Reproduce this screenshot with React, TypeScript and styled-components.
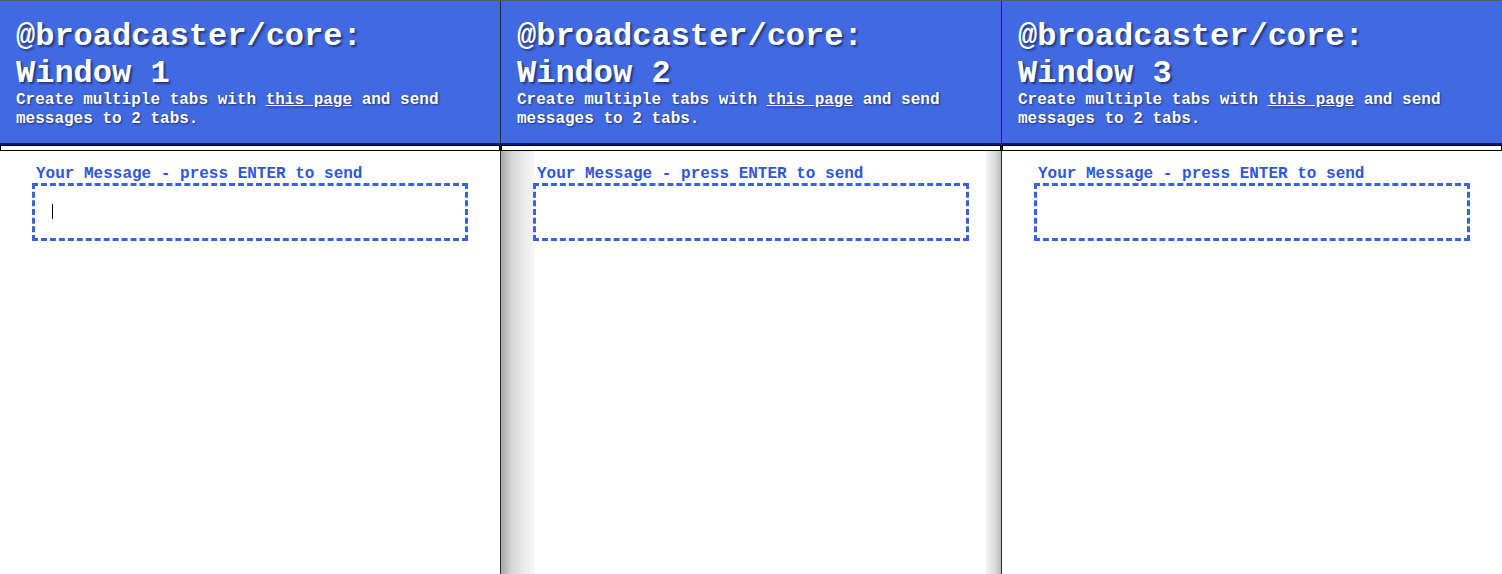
import { createGlobalStyle, css } from 'styled-components';
import styled from 'styled-components';

const GlobalStyle = createGlobalStyle`
  html, body {
    margin: 0;
    padding: 0;
    background: #ffffff;
  }
  body {
    font-family: "Liberation Mono", "Courier New", monospace;
  }
`;

const windows = [1, 2, 3];

export default function App() {
  return (
    <>
      <GlobalStyle />
      <Desk>
        {windows.map((n) => (
          <Window key={n} $divider={n !== 3}>
            <Header>
              <Title>
                @broadcaster/core:
                <br />
                Window {n}
              </Title>
              <Intro>
                Create multiple tabs with <IntroLink href="#">this page</IntroLink> and send
                messages to 2 tabs.
              </Intro>
            </Header>
            <Rule />
            <Body $shaded={n === 2}>
              <Label htmlFor={`msg-${n}`}>Your Message - press ENTER to send</Label>
              <InputWrap>
                <MessageInput id={`msg-${n}`} type="text" />
                {/* the first window has the focused field, caret drawn over it */}
                {n === 1 && <Caret />}
              </InputWrap>
            </Body>
          </Window>
        ))}
      </Desk>
    </>
  );
}

const Desk = styled.div`
  display: flex;
  width: 1502px;
  height: 574px;
  border-top: 1px solid #5a5a5a;
  box-sizing: border-box;
  overflow: hidden;
`;

const Window = styled.section<{ $divider: boolean }>`
  width: 500px;
  display: flex;
  flex-direction: column;
  background: #ffffff;
  ${(p) =>
    p.$divider &&
    css`
      border-right: 1px solid #2a2a2a;
    `}
`;

const Header = styled.header`
  background: #4169e1;
  color: #ffffff;
  padding: 17px 16px 0 16px;
  height: 144px;
  box-sizing: border-box;
  border-bottom: 2px solid #0b1a78;
`;

const Title = styled.h1`
  margin: 0;
  font-size: 32px;
  line-height: 37px;
  font-weight: bold;
  text-shadow: 2px 2px 2px rgba(0, 0, 0, 0.45);
`;

const Intro = styled.p`
  margin: -1px 0 0;
  font-size: 16px;
  line-height: 19px;
  font-weight: bold;
  text-shadow: 1px 1px 2px rgba(0, 0, 0, 0.5);
`;

const IntroLink = styled.a`
  color: #ffffff;
  text-decoration: underline;
`;

const Rule = styled.div`
  height: 4px;
  border: 1px solid #000000;
  background: #ffffff;
`;

const Body = styled.div<{ $shaded: boolean }>`
  flex: 1;
  display: flex;
  flex-direction: column;
  padding: 15px 32px 0;
  ${(p) =>
    p.$shaded &&
    css`
      background:
        linear-gradient(to right, #a8a8a8 0px, #d4d4d4 10px, #e8e8e8 22px, #f6f6f6 33px, #ffffff 34px) left / 34px 100% no-repeat,
        linear-gradient(to left, #bdbdbd 0px, #dcdcdc 6px, #efefef 14px, #ffffff 16px) right / 16px 100% no-repeat,
        #ffffff;
    `}
`;

const Label = styled.label`
  display: block;
  padding-left: 4px;
  font-size: 16px;
  line-height: 16px;
  font-weight: bold;
  color: #2f57d6;
  margin-bottom: 1px;
`;

const InputWrap = styled.div`
  position: relative;
  width: 436px;
  height: 58px;
`;

const MessageInput = styled.input`
  width: 100%;
  height: 100%;
  box-sizing: border-box;
  border: 3px dashed #3a62dc;
  background: transparent;
  padding: 0 16px;
  font-family: "Liberation Mono", "Courier New", monospace;
  font-size: 16px;
  outline: none;
`;

const Caret = styled.span`
  position: absolute;
  left: 20px;
  top: 21px;
  width: 1px;
  height: 15px;
  background: #000000;
  pointer-events: none;
`;
